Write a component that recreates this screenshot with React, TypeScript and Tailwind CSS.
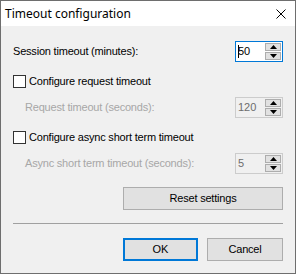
import React from 'react';

const body = { fontFamily: '"Liberation Sans", Arial, sans-serif' };
const title = { fontFamily: '"Noto Sans", "Open Sans", sans-serif' };

function Arrow({ down }: { down?: boolean }) {
  return (
    <svg width="7" height="4" viewBox="0 0 7 4" className="block">
      {down ? <polygon points="0,0 7,0 3.5,4" fill="#000" /> : <polygon points="0,4 7,4 3.5,0" fill="#000" />}
    </svg>
  );
}

function Spin({ value, focused, disabled }: { value: string; focused?: boolean; disabled?: boolean }) {
  return (
    <div
      className={
        'flex h-[21px] w-[48px] border ' +
        (focused ? 'border-[#0078d7] bg-white' : disabled ? 'border-[#cccccc] bg-[#f0f0f0]' : 'border-[#7a7a7a] bg-white')
      }
    >
      <div
        className={
          'flex flex-1 items-center pl-[2px] text-[11px] leading-none ' + (disabled ? 'text-[#6d6d6d]' : 'text-black')
        }
      >
        {focused && <span className="mr-[-1px] h-[13px] w-px bg-black" />}
        {value}
      </div>
      <div className="mr-[1px] flex w-[16px] flex-col gap-[1px] py-[1px]">
        <div className="flex h-[8px] items-center justify-center border border-[#adadad] bg-[#e1e1e1]">
          <Arrow />
        </div>
        <div className="flex h-[8px] items-center justify-center border border-[#adadad] bg-[#e1e1e1]">
          <Arrow down />
        </div>
      </div>
    </div>
  );
}

function Check({ label }: { label: string }) {
  return (
    <div className="flex h-[13px] items-center">
      <div className="h-[13px] w-[13px] border border-[#333333] bg-white" />
      <span className="ml-[3px] text-[11px] leading-none tracking-[-0.2px] text-black">{label}</span>
    </div>
  );
}

export default function App() {
  return (
    <div className="flex h-[274px] w-[296px] flex-col border border-[#6e6e6e] bg-[#f0f0f0]" style={body}>
      <div className="flex h-[25px] items-center justify-between bg-white pl-[4px] pr-[9px]">
        <span className="text-[12px] text-black" style={title}>
          Timeout configuration
        </span>
        <svg width="10" height="10" viewBox="0 0 10 10">
          <path d="M0.5 0.5 L9.5 9.5 M9.5 0.5 L0.5 9.5" stroke="#000" strokeWidth="1" />
        </svg>
      </div>

      <div className="flex flex-col pl-[12px] pr-[12px]">
        <div className="mt-[15px] flex h-[21px] items-center justify-between">
          <span className="text-[11px] leading-none tracking-[-0.2px] text-black">Session timeout (minutes):</span>
          <Spin value="50" focused />
        </div>

        <div className="mt-[13px]">
          <Check label="Configure request timeout" />
        </div>

        <div className="mt-[9px] flex h-[21px] items-center justify-between pl-[12px]">
          <span className="text-[11px] leading-none tracking-[-0.2px] text-[#a7a7a7]">Request timeout (seconds):</span>
          <Spin value="120" disabled />
        </div>

        <div className="mt-[13px]">
          <Check label="Configure async short term timeout" />
        </div>

        <div className="mt-[9px] flex h-[21px] items-center justify-between pl-[12px]">
          <span className="text-[11px] leading-none tracking-[-0.2px] text-[#a7a7a7]">
            Async short term timeout (seconds):
          </span>
          <Spin value="5" disabled />
        </div>

        <div className="mt-[13px] flex justify-end">
          <button className="h-[23px] w-[160px] border border-[#adadad] bg-[#e1e1e1] text-[11px] tracking-[-0.2px] text-black">
            Reset settings
          </button>
        </div>

        <div className="mt-[13px] h-px bg-[#a0a0a0]" />

        <div className="mt-[14px] flex justify-end gap-[9px]">
          <button className="h-[23px] w-[75px] border-2 border-[#0078d7] bg-[#e1e1e1] text-[11px] text-black">OK</button>
          <button className="h-[23px] w-[76px] border border-[#adadad] bg-[#e1e1e1] text-[11px] tracking-[-0.2px] text-black">
            Cancel
          </button>
        </div>
      </div>
    </div>
  );
}
